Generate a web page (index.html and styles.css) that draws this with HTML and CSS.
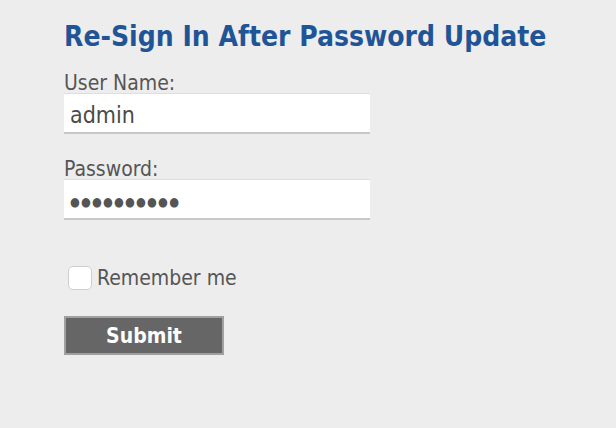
FILE: index.html
```html
<!DOCTYPE html>
<html>
<head>
<meta charset="utf-8">
<link rel="stylesheet" href="styles.css">
</head>
<body>
<main class="page">
  <h1 class="title">Re-Sign In After Password Update</h1>
  <form class="form">
    <label class="label" for="user">User Name:</label>
    <div class="field"><span class="value">admin</span></div>
    <label class="label label-pw" for="pw">Password:</label>
    <div class="field"><span class="value dots">●●●●●●●●●●</span></div>
    <div class="remember">
      <span class="box"></span>
      <span class="remember-text">Remember me</span>
    </div>
    <div class="submit">Submit</div>
  </form>
</main>
</body>
</html>
```

FILE: styles.css
```css
html, body {
  margin: 0;
  padding: 0;
  background: #ededed;
}
.page {
  padding: 20px 0 0 64px;
  font-family: "DejaVu Sans Condensed", "DejaVu Sans", sans-serif;
  color: #555;
}
.title {
  margin: 0;
  font-size: 28px;
  font-weight: bold;
  color: #1f5597;
  line-height: 34px;
}
.form {
  display: flex;
  flex-direction: column;
  align-items: flex-start;
}
.label {
  font-size: 21px;
  line-height: 20px;
  margin-top: 19px;
  color: #555;
}
.label-pw {
  margin-top: 25px;
}
.field {
  box-sizing: border-box;
  width: 306px;
  height: 41px;
  background: #fff;
  border-top: 1px solid #dedede;
  border-bottom: 2px solid #c8c8c8;
  display: flex;
  align-items: center;
  padding-left: 6px;
  padding-top: 3px;
}
.value {
  font-size: 23px;
  color: #4a4a4a;
}
.dots {
  font-size: 12.5px;
  letter-spacing: 1.2px;
  color: #555;
  padding-top: 2px;
}
.remember {
  margin-top: 46px;
  margin-left: 4px;
  display: flex;
  align-items: center;
  gap: 5px;
}
.box {
  box-sizing: border-box;
  width: 24px;
  height: 24px;
  background: #fff;
  border: 1px solid #cfcfcf;
  border-radius: 5px;
}
.remember-text {
  font-size: 21px;
  line-height: 24px;
  color: #555;
}
.submit {
  box-sizing: border-box;
  margin-top: 26px;
  width: 160px;
  height: 39px;
  background: #666;
  border: 2px solid #a0a0a0;
  color: #fff;
  font-weight: bold;
  font-size: 21px;
  display: flex;
  align-items: center;
  justify-content: center;
}
```
